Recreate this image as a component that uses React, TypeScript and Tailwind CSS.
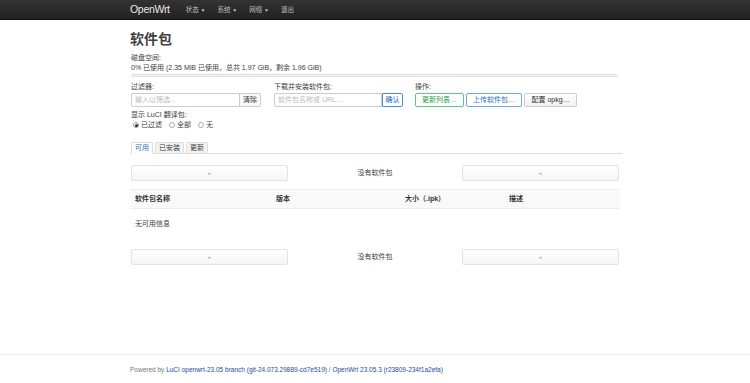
import React from 'react'

const font = { fontFamily: '"Liberation Sans", "Noto Sans CJK SC", sans-serif' }

function PagerButton({ label }: { label: string }) {
  return (
    <div className="flex h-[16px] w-[157px] items-center justify-center rounded-[2px] border border-[#e3e3e3] bg-gradient-to-b from-white to-[#f5f5f5] text-[6px] text-[#999]">
      {label}
    </div>
  )
}

function Pager() {
  return (
    <div className="flex items-center justify-between px-px">
      <PagerButton label="«" />
      <span className="text-[7px] text-[#404040]">没有软件包</span>
      <PagerButton label="»" />
    </div>
  )
}

export default function App() {
  return (
    <div className="flex min-h-[383px] flex-col bg-white text-[#404040]" style={font}>
      <header className="h-[20px] border-b border-[#111] bg-gradient-to-b from-[#333] to-[#222]">
        <div className="mx-auto flex h-full w-[490px] items-center">
          <span className="text-[10.5px] tracking-[-0.3px] text-[#e8e8e8]">OpenWrt</span>
          <nav className="ml-[16px] flex items-center gap-[12px] text-[6.5px] text-[#bfbfbf]">
            <span>状态 <span className="text-[5px]">▼</span></span>
            <span>系统 <span className="text-[5px]">▼</span></span>
            <span>网络 <span className="text-[5px]">▼</span></span>
            <span>退出</span>
          </nav>
        </div>
      </header>

      <main className="mx-auto w-[490px] flex-1">
        <h2 className="mt-[10px] text-[14px] font-bold leading-[18px] text-[#404040]">软件包</h2>

        <div className="mt-[5px] pl-px text-[7px] leading-[10px]">
          <div>磁盘空间:</div>
          <div>0% 已使用 (2.35 MiB 已使用，总共 1.97 GiB，剩余 1.96 GiB)</div>
          <div className="mt-[1px] h-[3px] w-[487px] rounded-full border border-[#ddd] bg-[#f7f7f7]" />
        </div>

        <div className="mt-[5px] flex pl-px text-[7px]">
          <div className="w-[143px]">
            <div className="leading-[10px]">过滤器:</div>
            <div className="mt-px flex h-[14px]">
              <div className="flex w-[109px] items-center rounded-l-[2px] border border-[#ccc] px-[3px] text-[#bbb]">输入以筛选…</div>
              <div className="flex w-[21px] items-center justify-center rounded-r-[2px] border border-l-0 border-[#ccc] bg-[#fafafa] text-[#333]">清除</div>
            </div>
          </div>
          <div className="w-[141px]">
            <div className="leading-[10px]">下载并安装软件包:</div>
            <div className="mt-px flex h-[14px]">
              <div className="flex w-[108px] items-center rounded-l-[2px] border border-[#ccc] px-[3px] text-[#bbb]">软件包名称或 URL…</div>
              <div className="flex w-[21px] items-center justify-center rounded-r-[2px] border border-[#4a90d9] bg-white text-[#1a66c0]">确认</div>
            </div>
          </div>
          <div>
            <div className="leading-[10px]">操作:</div>
            <div className="mt-px flex h-[14px] gap-[2px]">
              <div className="flex w-[49px] items-center justify-center rounded-[2px] border border-[#5cc77e] text-[#2a9a4d]">更新列表…</div>
              <div className="flex w-[56px] items-center justify-center rounded-[2px] border border-[#6ea8e6] text-[#2a72c8]">上传软件包…</div>
              <div className="flex w-[53px] items-center justify-center rounded-[2px] border border-[#ccc] bg-gradient-to-b from-white to-[#f2f2f2] text-[#333]">配置 opkg…</div>
            </div>
          </div>
        </div>

        <div className="mt-[3px] pl-px text-[7px] leading-[10px]">
          <div>显示 LuCI 翻译包:</div>
          <div className="flex items-center gap-[7px] pl-[2px]">
            <label className="flex items-center gap-[2px]">
              <span className="flex h-[6px] w-[6px] items-center justify-center rounded-full border border-[#999]">
                <span className="h-[3px] w-[3px] rounded-full bg-[#333]" />
              </span>
              已过滤
            </label>
            <label className="flex items-center gap-[2px]">
              <span className="h-[6px] w-[6px] rounded-full border border-[#aaa]" />
              全部
            </label>
            <label className="flex items-center gap-[2px]">
              <span className="h-[6px] w-[6px] rounded-full border border-[#aaa]" />
              无
            </label>
          </div>
        </div>

        <div className="mt-[12px] flex h-[12px] w-[492px] items-end gap-[2px] border-b border-[#ddd] pl-px text-[7px]">
          <div className="-mb-px flex h-[12px] items-center rounded-t-[2px] border border-b-white border-[#ddd] bg-white px-[3px] text-[#2a72c8]">可用</div>
          <div className="flex h-[11px] items-center rounded-t-[2px] border border-b-0 border-[#ddd] bg-[#f3f3f3] px-[3px]">已安装</div>
          <div className="flex h-[11px] items-center rounded-t-[2px] border border-b-0 border-[#ddd] bg-[#f3f3f3] px-[3px]">更新</div>
        </div>

        <div className="mt-[11px]">
          <Pager />
        </div>

        <div className="mt-[8px] text-[7px]">
          <div className="grid h-[20px] grid-cols-[141px_129px_104px_1fr] items-center border-t border-b border-[#eee] bg-[#f9f9f9] pl-[5px] font-bold text-[#333]">
            <span>软件包名称</span>
            <span>版本</span>
            <span>大小（.ipk）</span>
            <span>描述</span>
          </div>
          <div className="flex h-[31px] items-center pl-[5px]">无可用信息</div>
        </div>

        <div className="mt-[9px]">
          <Pager />
        </div>
      </main>

      <footer className="mt-[76px] border-t border-[#eee] pb-[8px] pt-[10px]">
        <div className="mx-auto w-[490px] text-[6.5px] text-[#777]">
          Powered by{' '}
          <span className="text-[#1a4e96]">LuCI openwrt-23.05 branch (git-24.073.29889-cd7e519)</span>
          {' / '}
          <span className="text-[#1a4e96]">OpenWrt 23.05.3 (r23809-234f1a2efa)</span>
        </div>
      </footer>
    </div>
  )
}
